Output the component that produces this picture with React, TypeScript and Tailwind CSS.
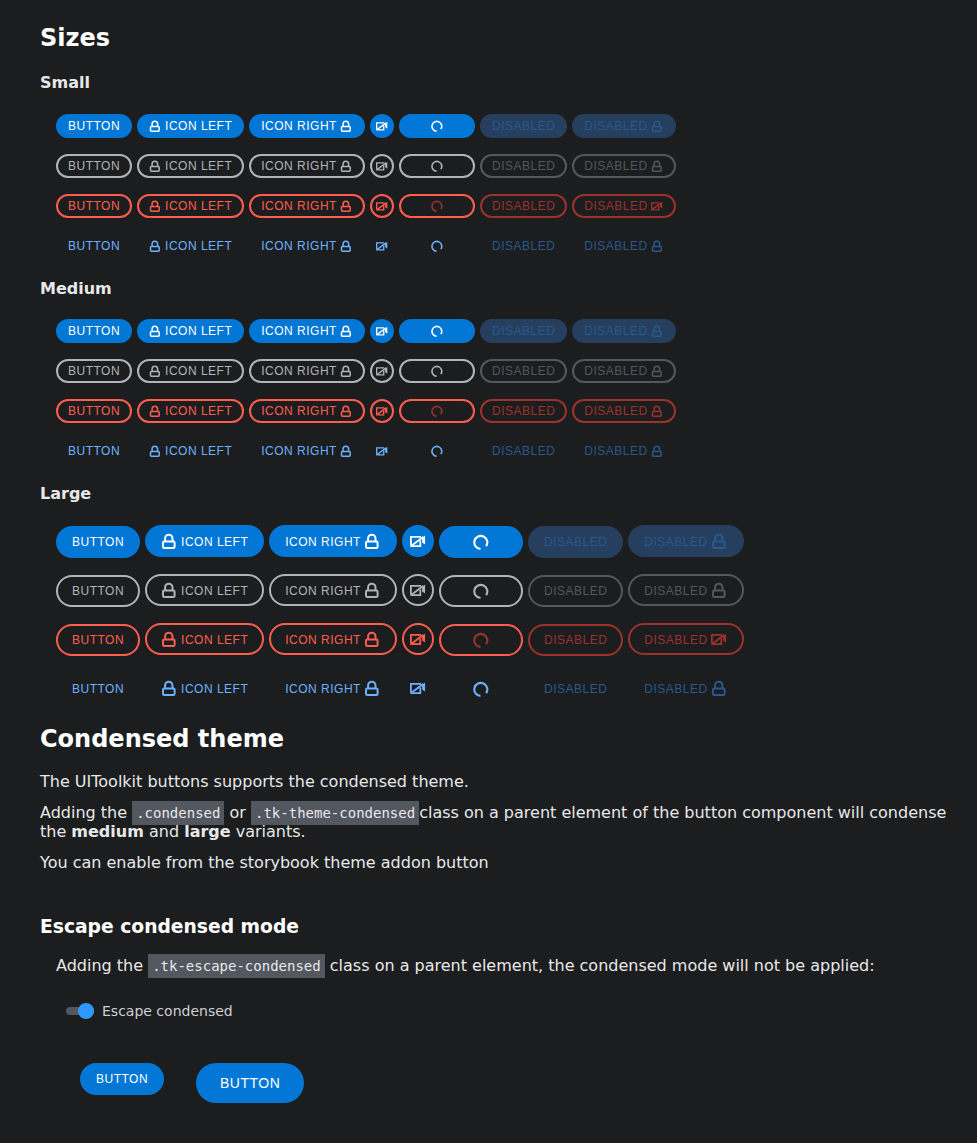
import React from "react";

type Variant = "primary" | "secondary" | "destructive" | "tertiary";
type Size = "sm" | "lg";
type IconName = "lock" | "camera";

const enabledStyle: Record<Variant, string> = {
  primary: "bg-[#0277d6] text-white border-[#0277d6]",
  secondary: "text-[#b0b3ba] border-[#b0b3ba]",
  destructive: "text-[#ff5d50] border-[#ff5d50]",
  tertiary: "text-[#6cb2ff] border-transparent",
};

const disabledStyle: Record<Variant, string> = {
  primary: "bg-[#263f5e] text-[#27588e] border-[#263f5e]",
  secondary: "text-[#525760] border-[#525760]",
  destructive: "text-[#9c322b] border-[#9c322b]",
  tertiary: "text-[#27588e] border-transparent",
};

function Icon({ name, size }: { name: IconName; size: Size }) {
  const box = size === "lg" ? "size-4" : "size-3";
  return (
    <svg viewBox="0 0 16 16" fill="none" stroke="currentColor" className={`${box} shrink-0`}>
      {name === "lock" ? (
        <>
          <rect x="2" y="8.5" width="11.6" height="6.4" rx="1.2" strokeWidth="2" />
          <path d="M4.1 8.5V5.4a3.7 3.7 0 0 1 7.4 0v3.1" strokeWidth="2" />
        </>
      ) : (
        <>
          <path d="M11 3.8H0.9v8.6M1.6 13.2h8.7V7.6" strokeWidth="1.8" />
          <path d="M0.4 13.5L13.4 3.8" strokeWidth="1.8" />
          <path d="M11.3 5.9L15.1 2.4v9.2l-3-2.2V6.2z" fill="currentColor" stroke="none" />
        </>
      )}
    </svg>
  );
}

function Spinner({ size }: { size: Size }) {
  return (
    <svg
      viewBox="0 0 16 16"
      fill="none"
      stroke="currentColor"
      className={size === "lg" ? "size-4" : "size-3"}
    >
      <path d="M13.1 12.2A6.5 6.5 0 1 0 7.5 14.9" strokeWidth="2.1" />
    </svg>
  );
}

interface PillProps {
  variant: Variant;
  size: Size;
  label?: string;
  left?: IconName;
  right?: IconName;
  only?: IconName;
  loading?: boolean;
  disabled?: boolean;
}

function Pill({ variant, size, label, left, right, only, loading, disabled }: PillProps) {
  const large = size === "lg";
  const hasIcon = Boolean(left || right);
  const color = disabled ? disabledStyle[variant] : enabledStyle[variant];
  let shape = large ? "h-8 px-3.5" : "h-6 px-2.5";
  if (only) shape = large ? "size-8" : "size-6";
  if (loading) shape = large ? "h-8 w-[84.2px]" : "h-6 w-[76.2px]";
  const align = large && (hasIcon || only) ? "self-start" : "self-end";
  return (
    <button
      disabled={disabled}
      className={`flex shrink-0 items-center justify-center gap-1 rounded-full border-2 text-[12px] leading-[14px] tracking-[0.5px] ${shape} ${align} ${color}`}
    >
      {left && <Icon name={left} size={size} />}
      {label && <span className={large && hasIcon ? "pt-px" : ""}>{label}</span>}
      {right && (
        <span className="mr-[0.5px] -ml-[0.5px]">
          <Icon name={right} size={size} />
        </span>
      )}
      {only && <Icon name={only} size={size} />}
      {loading && (
        <span className={variant === "destructive" ? "text-[#9c322b]" : ""}>
          <Spinner size={size} />
        </span>
      )}
    </button>
  );
}

const variants: Variant[] = ["primary", "secondary", "destructive", "tertiary"];

function Matrix({ size, cameraOnDisabled }: { size: Size; cameraOnDisabled?: boolean }) {
  return (
    <div className="flex flex-col gap-4 pl-4 font-['Liberation_Sans',sans-serif]">
      {variants.map((v) => (
        <div key={v} className={`flex gap-[4.98px] ${size === "lg" ? "h-[33px]" : "h-6"}`}>
          <Pill variant={v} size={size} label="BUTTON" />
          <Pill variant={v} size={size} label="ICON LEFT" left="lock" />
          <Pill variant={v} size={size} label="ICON RIGHT" right="lock" />
          <Pill variant={v} size={size} only="camera" />
          <Pill variant={v} size={size} loading />
          <Pill variant={v} size={size} label="DISABLED" disabled />
          <Pill
            variant={v}
            size={size}
            label="DISABLED"
            right={cameraOnDisabled && v === "destructive" ? "camera" : "lock"}
            disabled
          />
        </div>
      ))}
    </div>
  );
}

function Code({ children }: { children: React.ReactNode }) {
  return (
    <code className="bg-[#525760] px-1 py-1 font-['DejaVu_Sans_Mono',monospace] text-[14px] leading-none">
      {children}
    </code>
  );
}

export default function App() {
  return (
    <main className="h-[1143px] overflow-hidden bg-[#1c1d1f] pt-6 pr-5 pl-10 font-['DejaVu_Sans',sans-serif] text-[16px] leading-[19px] text-[#e8e8e9]">
      <h2 className="text-[24px] leading-[28px] font-bold text-white">Sizes</h2>
      <h4 className="mt-[21px] mb-[22px] font-bold">Small</h4>
      <Matrix size="sm" cameraOnDisabled />
      <h4 className="my-[21px] font-bold">Medium</h4>
      <Matrix size="sm" />
      <h4 className="mt-[21px] mb-[22px] font-bold">Large</h4>
      <Matrix size="lg" cameraOnDisabled />

      <h2 className="mt-5 text-[24px] leading-[28px] font-bold text-white">Condensed theme</h2>
      <p className="mt-[19px]">The UIToolkit buttons supports the condensed theme.</p>
      <p className="mt-3">
        Adding the <Code>.condensed</Code> or <Code>.tk-theme-condensed</Code>class on a parent
        element of the button component will condense the <b>medium</b> and <b>large</b> variants.
      </p>
      <p className="mt-3">You can enable from the storybook theme addon button</p>

      <h3 className="mt-11 text-[18.72px] leading-[22px] font-bold text-white">
        Escape condensed mode
      </h3>
      <div className="pl-4">
        <p className="mt-[18px]">
          Adding the <Code>.tk-escape-condensed</Code> class on a parent element, the condensed mode
          will not be applied:
        </p>
        <label className="mt-7 flex h-4 items-center pl-2.5 text-[14px] leading-4 text-[#cdcfd4]">
          <span className="flex h-2 w-7 items-center justify-end rounded-full bg-[#525760]">
            <span className="size-4 rounded-full bg-[#2e9aff]" />
          </span>
          <span className="ml-2">Escape condensed</span>
        </label>
        <div className="mt-11 flex items-start gap-8 pl-6 font-['Liberation_Sans',sans-serif]">
          <div className="flex">
            <Pill variant="primary" size="lg" label="BUTTON" />
          </div>
          <button className="h-10 w-[108px] rounded-full bg-[#0277d6] text-[14px] leading-4 tracking-[0.5px] text-white">
            BUTTON
          </button>
        </div>
      </div>
    </main>
  );
}
